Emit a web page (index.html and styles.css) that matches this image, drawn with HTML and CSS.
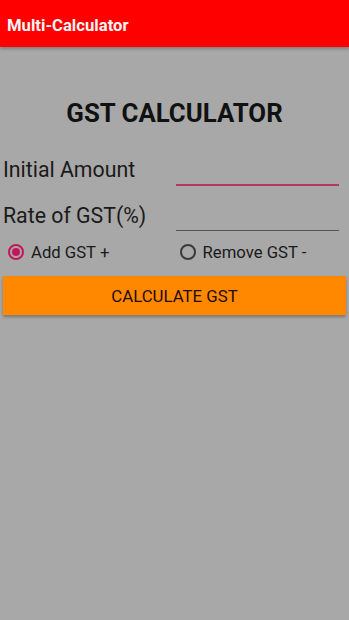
FILE: index.html
```html
<!DOCTYPE html>
<html lang="en">
<head>
    <meta charset="UTF-8">
    <meta name="viewport" content="width=device-width, initial-scale=1.0">
    <title>Multi-Calculator</title>
    <link rel="stylesheet" href="styles.css">
</head>
<body>
    <header class="app-bar">
        <span class="app-title">Multi-Calculator</span>
    </header>
    <main class="content">
        <h1>GST CALCULATOR</h1>
        <div class="field-row">
            <label class="field-label">Initial Amount</label>
            <div class="field-input focused"></div>
        </div>
        <div class="field-row">
            <label class="field-label">Rate of GST(%)</label>
            <div class="field-input"></div>
        </div>
        <div class="radio-row">
            <div class="radio-item">
                <span class="radio checked"></span>
                <span>Add GST +</span>
            </div>
            <div class="radio-item">
                <span class="radio"></span>
                <span>Remove GST -</span>
            </div>
        </div>
        <button class="calc-btn">CALCULATE GST</button>
    </main>
</body>
</html>
```

FILE: styles.css
```css
body {
    margin: 0;
    background-color: #a8a8a8;
    font-family: Roboto, "Liberation Sans", sans-serif;
    width: 349px;
    height: 620px;
    overflow: hidden;
}
.app-bar {
    background-color: #ff0000;
    height: 47px;
    display: flex;
    align-items: center;
    padding-left: 7px;
    box-shadow: 0 2px 3px rgba(0, 0, 0, 0.25);
}
.app-title {
    color: #f4f4f4;
    font-size: 16.7px;
    font-weight: bold;
    margin-top: 3px;
}
.content {
    padding: 0 3px;
}
h1 {
    margin: 50px 0 0;
    text-align: center;
    font-size: 25.8px;
    font-weight: bold;
    color: #111111;
    line-height: 32px;
}
.field-row {
    display: flex;
    align-items: flex-start;
    height: 46px;
}
.field-row:first-of-type {
    margin-top: 26px;
}
.field-label {
    width: 173px;
    font-size: 21.3px;
    color: #1a1a1a;
    line-height: 30px;
}
.field-input {
    width: 163px;
    height: 29px;
    border-bottom: 1px solid #555555;
}
.field-input.focused {
    border-bottom: 2px solid #b23a5a;
    height: 29px;
}
.radio-row {
    display: flex;
    align-items: center;
    margin-top: -6px;
    height: 22px;
}
.radio-item {
    display: flex;
    align-items: center;
    gap: 7px;
    font-size: 16.7px;
    color: #1a1a1a;
    width: 172px;
    padding-left: 5px;
}
.radio {
    width: 12px;
    height: 12px;
    border: 2px solid #3a3a3a;
    border-radius: 50%;
    box-sizing: content-box;
    position: relative;
}
.radio.checked {
    border-color: #c2185b;
}
.radio.checked::after {
    content: "";
    position: absolute;
    left: 2px;
    top: 2px;
    width: 8px;
    height: 8px;
    border-radius: 50%;
    background-color: #c2185b;
}
.calc-btn {
    display: block;
    width: 100%;
    margin-top: 13px;
    height: 39px;
    border: none;
    background-color: #ff8800;
    color: #1f0d00;
    font-family: Roboto, "Liberation Sans", sans-serif;
    font-size: 16.8px;
    font-weight: 400;
    box-shadow: 0 2px 3px rgba(0, 0, 0, 0.3);
}
```
